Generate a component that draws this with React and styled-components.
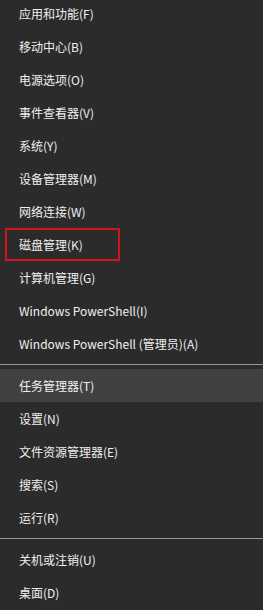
import React from "react";
import styled, { createGlobalStyle } from "styled-components";

const GlobalStyle = createGlobalStyle`
  html, body {
    margin: 0;
    padding: 0;
    background: #2b2b2b;
    overflow: hidden;
  }
`;

const groups = [
  [
    { label: "应用和功能(F)" },
    { label: "移动中心(B)" },
    { label: "电源选项(O)" },
    { label: "事件查看器(V)" },
    { label: "系统(Y)" },
    { label: "设备管理器(M)" },
    { label: "网络连接(W)" },
    { label: "磁盘管理(K)", marked: true },
    { label: "计算机管理(G)" },
    { label: "Windows PowerShell(I)" },
    { label: "Windows PowerShell (管理员)(A)" },
  ],
  [
    { label: "任务管理器(T)", hover: true },
    { label: "设置(N)" },
    { label: "文件资源管理器(E)" },
    { label: "搜索(S)" },
    { label: "运行(R)" },
  ],
  [{ label: "关机或注销(U)" }, { label: "桌面(D)" }],
];

const Menu = styled.div`
  width: 263px;
  height: 610px;
  background: #2b2b2b;
  display: flex;
  flex-direction: column;
  margin-top: -3px;
  font-family: "Microsoft YaHei", "Noto Sans CJK SC", "Noto Sans", sans-serif;
  font-size: 12px;
  color: #f0f0f0;
`;

const Item = styled.div`
  position: relative;
  height: 33px;
  flex-shrink: 0;
  display: flex;
  align-items: center;
  padding-left: 19px;
  background: ${(p) => (p.$hover ? "#414141" : "transparent")};
  white-space: nowrap;
`;

const Mark = styled.span`
  position: absolute;
  left: 5px;
  top: 0;
  width: 115px;
  height: 33px;
  box-sizing: border-box;
  border: 2px solid #d3141c;
`;

const Separator = styled.div`
  height: 9px;
  flex-shrink: 0;
  display: flex;
  align-items: center;

  &::after {
    content: "";
    flex: 1;
    height: 1px;
    background: #9a9a9a;
  }
`;

export default function App() {
  return (
    <>
      <GlobalStyle />
      <Menu>
        {groups.map((group, gi) => (
          <React.Fragment key={gi}>
            {gi > 0 && <Separator />}
            {group.map((item) => (
              <Item key={item.label} $hover={item.hover}>
                {item.label}
                {item.marked && <Mark />}
              </Item>
            ))}
          </React.Fragment>
        ))}
      </Menu>
    </>
  );
}
